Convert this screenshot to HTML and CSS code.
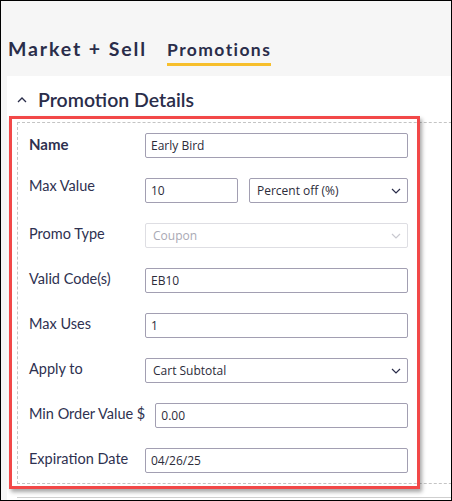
FILE: index.html
```html
<!DOCTYPE html>
<html lang="en">
<head>
<meta charset="utf-8">
<title>Promotions</title>
<link rel="stylesheet" href="styles.css">
</head>
<body>
<div class="page">
  <header class="header">
    <h1 class="brand">Market + Sell</h1>
    <nav class="tabs"><span class="tab active">Promotions</span></nav>
  </header>
  <section class="panel">
    <div class="section-head">
      <svg class="collapse" width="10" height="6" viewBox="0 0 10 6"><path d="M1 5 L5 1 L9 5" fill="none" stroke="#2a2d4a" stroke-width="1.3"/></svg>
      <h2 class="section-title">Promotion Details</h2>
    </div>
    <div class="form-wrap">
      <form class="form-box">
        <div class="row">
          <label class="label bold">Name</label>
          <div class="field"><input class="input" value="Early Bird"></div>
        </div>
        <div class="row">
          <label class="label raised">Max Value</label>
          <div class="field split">
            <input class="input small" value="10">
            <div class="select"><span>Percent off (%)</span><svg class="chev" width="10" height="6" viewBox="0 0 10 6"><path d="M1 1 L5 5 L9 1" fill="none" stroke="#2a2d4a" stroke-width="1.2"/></svg></div>
          </div>
        </div>
        <div class="row">
          <label class="label">Promo Type</label>
          <div class="field"><div class="select disabled"><span>Coupon</span><svg class="chev" width="10" height="6" viewBox="0 0 10 6"><path d="M1 1 L5 5 L9 1" fill="none" stroke="#c9c9d0" stroke-width="1.2"/></svg></div></div>
        </div>
        <div class="row">
          <label class="label">Valid Code(s)</label>
          <div class="field"><input class="input" value="EB10"></div>
        </div>
        <div class="row">
          <label class="label">Max Uses</label>
          <div class="field"><input class="input" value="1"></div>
        </div>
        <div class="row">
          <label class="label">Apply to</label>
          <div class="field"><div class="select"><span>Cart Subtotal</span><svg class="chev" width="10" height="6" viewBox="0 0 10 6"><path d="M1 1 L5 5 L9 1" fill="none" stroke="#2a2d4a" stroke-width="1.2"/></svg></div></div>
        </div>
        <div class="row">
          <label class="label">Min Order Value $</label>
          <div class="field"><input class="input" value="0.00"></div>
        </div>
        <div class="row">
          <label class="label">Expiration Date</label>
          <div class="field"><input class="input" value="04/26/25"></div>
        </div>
      </form>
      <div class="highlight"></div>
    </div>
    <div class="next-section"></div>
  </section>
</div>
</body>
</html>
```
FILE: styles.css
```css
* { box-sizing: border-box; }
html, body { margin: 0; padding: 0; }
body { background: #fff; }
.page {
  width: 452px;
  height: 501px;
  border: 1px solid #000;
  background: #f6f6f6;
  overflow: hidden;
  font-family: Lato, "Noto Sans", sans-serif;
  color: #2a2d4a;
}
.header {
  display: flex;
  align-items: baseline;
  gap: 20px;
  padding: 36px 0 0 7px;
  height: 75px;
}
.brand {
  margin: 0;
  font-size: 19.5px;
  font-weight: 700;
  letter-spacing: 1.9px;
  line-height: 24px;
}
.tab {
  display: inline-block;
  font-size: 17.5px;
  font-weight: 700;
  letter-spacing: 1.4px;
  line-height: 22px;
  padding-bottom: 2px;
  border-bottom: 3px solid #f7bf2c;
}
.panel {
  margin-left: 6px;
  background: #fff;
  height: 430px;
  overflow: hidden;
}
.section-head {
  display: flex;
  align-items: center;
  height: 46px;
  padding: 2px 0 0 10px;
}
.collapse { margin-right: 11px; }
.section-title {
  margin: 0;
  font-size: 19.5px;
  font-weight: 600;
  line-height: 24px;
}
.form-wrap { position: relative; }
.form-box {
  margin: 0 0 0 10px;
  width: 470px;
  border: 1px dashed #c4c4c4;
  padding: 10px 0 10px 11px;
  display: flex;
  flex-direction: column;
  gap: 20px;
}
.row {
  display: flex;
  align-items: center;
  width: 379px;
  height: 25px;
}
.label {
  min-width: 116px;
  padding: 0 10px 3px 0;
  font-size: 14.5px;
  line-height: 20px;
  color: #2e3150;
  white-space: nowrap;
}
.label.raised { padding-bottom: 9px; }
.label.bold { font-weight: 700; font-size: 15px; }
.field { flex: 1; display: flex; height: 25px; }
.field.split { gap: 11px; }
.input, .select {
  height: 25px;
  border: 1px solid #a29fb2;
  border-radius: 2px;
  background: #fff;
  font-family: "Open Sans", "Noto Sans", sans-serif;
  font-size: 12px;
  color: #2c2c3a;
}
.input {
  width: 100%;
  padding: 0 5px;
  outline: none;
}
.input.small { width: 93px; flex: 0 0 93px; }
.select {
  flex: 1;
  display: flex;
  align-items: center;
  justify-content: space-between;
  padding: 0 6px 0 7px;
}
.select.disabled { border-color: #dedee3; color: #a9a9b4; }
.highlight {
  position: absolute;
  left: 2px;
  top: -6px;
  width: 411px;
  height: 373px;
  border: 3px solid #f24848;
  box-shadow: 2px 3px 4px rgba(0,0,0,0.35);
  pointer-events: none;
}
.next-section {
  margin: 13px 0 0 10px;
  border-top: 1px solid #cfcfcf;
}
```
